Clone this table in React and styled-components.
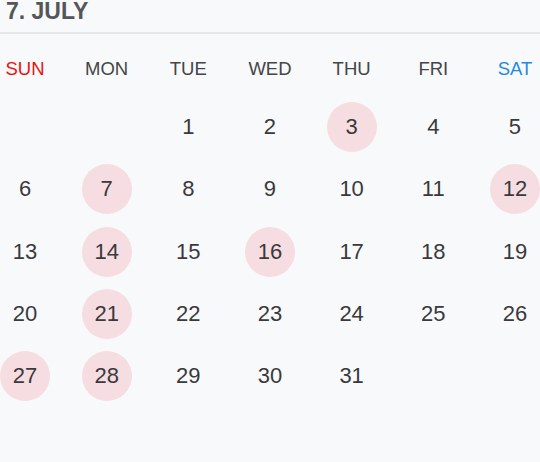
import React from "react"
import styled, { createGlobalStyle } from "styled-components"

const GlobalStyle = createGlobalStyle`
  html, body {
    margin: 0;
    padding: 0;
    background: #f8f9fb;
    font-family: "Liberation Sans", Arial, sans-serif;
  }
  body {
    width: 540px;
    height: 462px;
    overflow: hidden;
  }
`

const WEEKDAYS = ["SUN", "MON", "TUE", "WED", "THU", "FRI", "SAT"]
const FIRST_OFFSET = 2
const DAYS_IN_MONTH = 31
const MARKED = [3, 7, 12, 14, 16, 21, 27, 28]

function App() {
  const cells = []
  for (let i = 0; i < FIRST_OFFSET; i++) cells.push(null)
  for (let d = 1; d <= DAYS_IN_MONTH; d++) cells.push(d)

  return (
    <>
      <GlobalStyle />
      <Calendar>
        <MonthTitle>7. JULY</MonthTitle>
        <Grid>
          {WEEKDAYS.map((w, i) => (
            <Weekday key={w} day={i}>
              {w}
            </Weekday>
          ))}
        </Grid>
        <DayGrid>
          {cells.map((d, i) =>
            d === null ? (
              <Empty key={"e" + i} />
            ) : (
              <Day key={d} marked={MARKED.includes(d) ? 1 : 0}>
                {d}
              </Day>
            )
          )}
        </DayGrid>
      </Calendar>
    </>
  )
}

const Calendar = styled.div`
  width: 540px;
  display: flex;
  flex-direction: column;
`

const MonthTitle = styled.h1`
  margin: -3px 0 0 0;
  padding: 0 6px 7px;
  font-size: 23px;
  line-height: 28px;
  font-weight: 700;
  color: #555659;
  border-bottom: 2px solid #e6e7ea;
`

const Grid = styled.div`
  display: grid;
  grid-template-columns: repeat(7, 50px);
  justify-content: space-between;
  padding-top: 23px;
`

const Weekday = styled.div`
  text-align: center;
  font-size: 18.5px;
  line-height: 24px;
  white-space: nowrap;
  color: ${(p) => (p.day === 0 ? "#ee1111" : p.day === 6 ? "#1f8ae6" : "#444548")};
`

const DayGrid = styled(Grid)`
  padding-top: 21px;
  row-gap: 12.25px;
`

const Empty = styled.div`
  height: 50px;
`

const Day = styled.div`
  width: 50px;
  height: 50px;
  border-radius: 50%;
  display: flex;
  align-items: center;
  justify-content: center;
  font-size: 22px;
  color: #3a3a3c;
  background: ${(p) => (p.marked ? "#f6dde1" : "transparent")};
`

export default App
